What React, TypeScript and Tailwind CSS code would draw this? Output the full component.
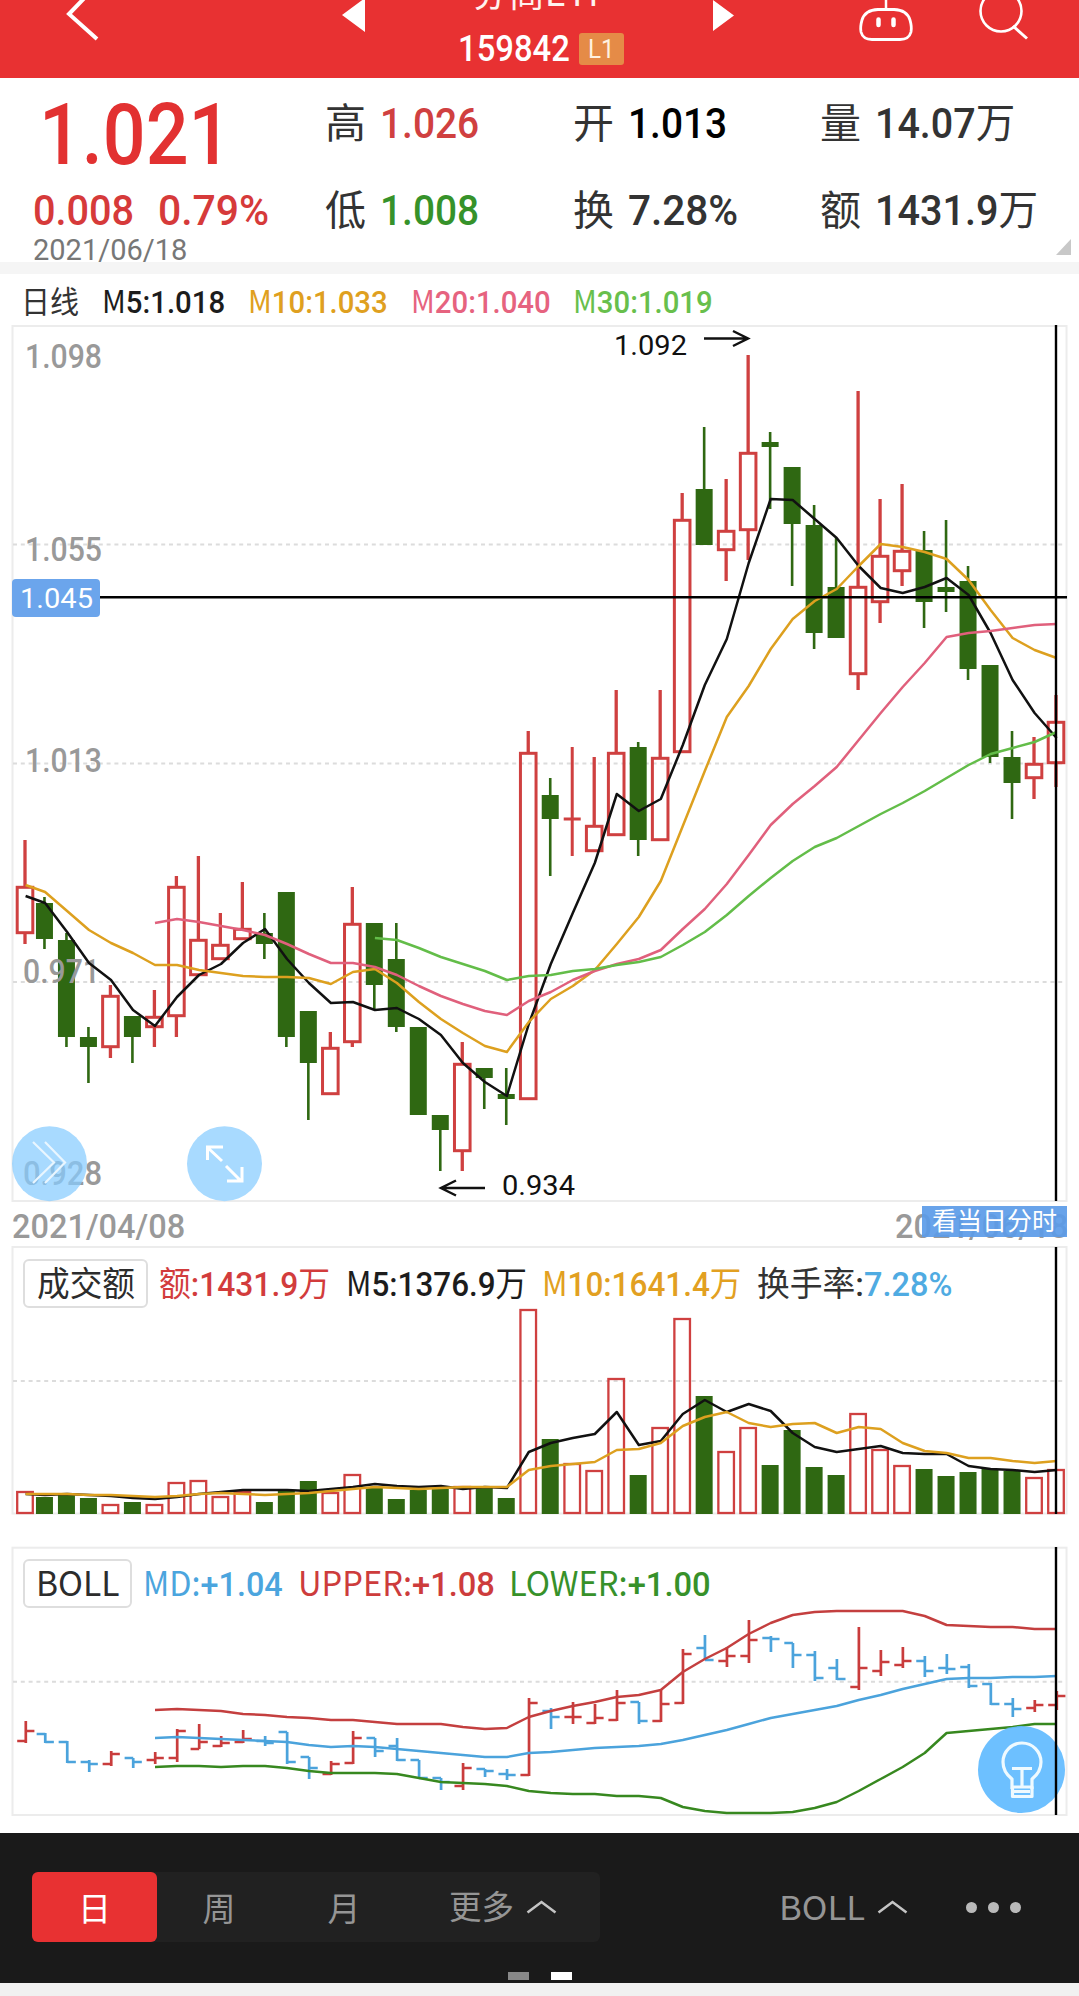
import React, { useLayoutEffect, useRef, useState } from "react";

const RED = "#cf4040";
const GREEN = "#2f6812";
const BLUE = "#4ba3dc";

const STEP = 21.99;
const cx = (i: number) => (i === 0 ? 25 : 1056 - (47 - i) * STEP);

type Kind = "r" | "g";

// kind, high, body top, body bottom, low, volume top
const candles: [Kind, number, number, number, number, number][] = [
  ["r", 840, 886, 934, 944, 1491],
  ["g", 897, 903, 939, 949, 1497],
  ["g", 933, 940, 1037, 1047, 1495],
  ["g", 1027, 1037, 1047, 1083, 1498],
  ["r", 985, 995, 1048, 1058, 1504],
  ["g", 1016, 1016, 1037, 1063, 1502],
  ["r", 990, 1016, 1028, 1047, 1504],
  ["r", 876, 886, 1017, 1037, 1482],
  ["r", 856, 939, 976, 976, 1480],
  ["r", 913, 944, 960, 960, 1496],
  ["r", 882, 928, 940, 940, 1491],
  ["g", 913, 933, 944, 959, 1502],
  ["g", 892, 892, 1037, 1047, 1491],
  ["g", 1011, 1011, 1063, 1120, 1481],
  ["r", 1032, 1047, 1095, 1095, 1492],
  ["r", 887, 923, 1043, 1047, 1474],
  ["g", 923, 923, 985, 1010, 1488],
  ["g", 923, 959, 1027, 1032, 1499],
  ["g", 1027, 1027, 1115, 1115, 1490],
  ["g", 1115, 1115, 1130, 1171, 1489],
  ["r", 1042, 1063, 1152, 1171, 1486],
  ["g", 1068, 1068, 1078, 1109, 1487],
  ["g", 1068, 1094, 1099, 1125, 1498],
  ["r", 731, 752, 1100, 1100, 1309],
  ["g", 778, 795, 819, 876, 1439],
  ["r", 747, 819, 819, 856, 1463],
  ["r", 757, 825, 852, 852, 1470],
  ["r", 690, 752, 836, 836, 1378],
  ["g", 742, 747, 840, 856, 1475],
  ["r", 690, 757, 841, 841, 1427],
  ["r", 493, 519, 753, 753, 1318],
  ["g", 427, 489, 545, 545, 1396],
  ["r", 479, 530, 551, 581, 1451],
  ["r", 355, 452, 531, 560, 1427],
  ["g", 432, 442, 447, 509, 1465],
  ["g", 467, 467, 524, 586, 1430],
  ["g", 505, 525, 633, 649, 1467],
  ["g", 538, 587, 638, 638, 1475],
  ["r", 391, 586, 675, 690, 1413],
  ["r", 499, 555, 603, 623, 1449],
  ["r", 484, 550, 572, 586, 1465],
  ["g", 531, 550, 602, 628, 1469],
  ["g", 520, 587, 592, 612, 1476],
  ["g", 566, 581, 669, 680, 1472],
  ["g", 665, 665, 757, 763, 1469],
  ["g", 731, 757, 783, 819, 1471],
  ["r", 737, 763, 779, 799, 1477],
  ["r", 695, 721, 764, 787, 1469],
];

// high, open, close, low
const bollBars: [number, number, number, number][] = [
  [1721, 1741, 1731, 1743], [1733, 1734, 1742, 1743], [1741, 1742, 1762, 1763], [1760, 1762, 1764, 1772],
  [1751, 1764, 1754, 1766], [1758, 1758, 1762, 1768], [1752, 1760, 1758, 1764], [1729, 1758, 1731, 1762],
  [1724, 1749, 1742, 1749], [1736, 1746, 1743, 1747], [1730, 1742, 1739, 1743], [1736, 1741, 1743, 1746],
  [1732, 1732, 1762, 1764], [1757, 1757, 1768, 1779], [1761, 1774, 1764, 1775], [1731, 1763, 1738, 1764],
  [1738, 1738, 1751, 1757], [1738, 1746, 1760, 1761], [1760, 1760, 1778, 1779], [1778, 1778, 1782, 1790],
  [1763, 1786, 1768, 1790], [1769, 1769, 1771, 1777], [1769, 1774, 1775, 1780], [1698, 1775, 1703, 1776],
  [1708, 1711, 1717, 1729], [1702, 1717, 1717, 1724], [1704, 1723, 1718, 1724], [1690, 1720, 1703, 1721],
  [1702, 1702, 1721, 1724], [1690, 1721, 1704, 1722], [1649, 1703, 1654, 1704], [1635, 1648, 1660, 1660],
  [1647, 1661, 1656, 1667], [1620, 1656, 1640, 1663], [1636, 1638, 1639, 1652], [1643, 1643, 1655, 1668],
  [1651, 1655, 1678, 1681], [1659, 1668, 1679, 1680], [1627, 1687, 1668, 1690], [1650, 1671, 1662, 1676],
  [1647, 1665, 1661, 1668], [1656, 1661, 1671, 1677], [1654, 1668, 1669, 1674], [1664, 1667, 1686, 1688],
  [1683, 1684, 1704, 1705], [1698, 1704, 1709, 1717], [1700, 1708, 1705, 1712], [1691, 1705, 1696, 1710],
];

const ma5 = [
  896, 903, 932, 963, 980, 1010, 1026, 997, 975, 964, 943, 929, 959, 983, 1003, 1002, 1010, 1008, 1019, 1035, 1063,
  1082, 1096, 1024, 964, 913, 863, 794, 811, 799, 745, 685, 639, 563, 499, 500, 519, 538, 566, 588, 593, 587, 578, 595,
  633, 680, 713, 738,
];
const ma10 = [
  885, 892, 911, 930, 943, 953, 965, 965, 970, 973, 976, 977, 977, 978, 984, 972, 969, 983, 1002, 1019, 1033, 1046,
  1052, 1022, 999, 986, 970, 944, 917, 881, 826, 771, 717, 686, 649, 619, 601, 589, 566, 544, 547, 552, 559, 580, 610,
  638, 650, 658,
];
const ma20 = [
  923, 919, 922, 926, 930, 935, 944, 954, 963, 963, 967, 975, 986, 996, 1004, 1011, 1015, 1001, 992, 980, 971, 964, 959,
  950, 929, 909, 884, 855, 825, 804, 786, 767, 740, 713, 687, 663, 637, 633, 631, 628, 625, 624,
];
const ma30 = [
  938, 940, 948, 957, 964, 971, 980, 976, 975, 971, 969, 965, 962, 957, 945, 932, 915, 896, 878, 861, 847, 838, 826,
  814, 803, 791, 778, 765, 754, 748, 742, 732,
];
const vol5 = [
  1494, 1495, 1494, 1495, 1496, 1498, 1499, 1497, 1494, 1492, 1490, 1490, 1490, 1491, 1489, 1487, 1484, 1486, 1487,
  1486, 1489, 1487, 1488, 1452, 1443, 1438, 1434, 1412, 1445, 1441, 1414, 1400, 1412, 1404, 1411, 1433, 1447, 1452,
  1449, 1446, 1453, 1454, 1454, 1466, 1469, 1470, 1472, 1470,
];
const vol10 = [
  1494, 1494, 1494, 1495, 1495, 1496, 1497, 1496, 1494, 1493, 1494, 1495, 1494, 1493, 1491, 1489, 1487, 1488, 1489,
  1488, 1487, 1487, 1487, 1470, 1466, 1464, 1462, 1450, 1449, 1443, 1426, 1417, 1412, 1423, 1427, 1424, 1423, 1433,
  1427, 1429, 1443, 1451, 1453, 1458, 1458, 1461, 1463, 1461,
];
const upper = [
  1710, 1709, 1710, 1711, 1714, 1715, 1717, 1718, 1720, 1720, 1722, 1724, 1724, 1724, 1727, 1729, 1728, 1717, 1711,
  1706, 1702, 1697, 1695, 1690, 1672, 1659, 1648, 1634, 1623, 1615, 1612, 1611, 1611, 1611, 1611, 1616, 1625, 1626,
  1627, 1627, 1629, 1629,
];
const middle = [
  1738, 1737, 1738, 1739, 1740, 1741, 1742, 1745, 1747, 1746, 1747, 1749, 1751, 1753, 1755, 1757, 1757, 1753, 1752,
  1750, 1748, 1747, 1746, 1744, 1740, 1735, 1730, 1724, 1718, 1714, 1710, 1706, 1700, 1695, 1689, 1684, 1679, 1678,
  1678, 1677, 1677, 1676,
];
const lower = [
  1767, 1766, 1766, 1767, 1766, 1766, 1768, 1771, 1773, 1773, 1773, 1774, 1778, 1782, 1783, 1784, 1786, 1791, 1793,
  1794, 1794, 1796, 1796, 1798, 1807, 1811, 1813, 1813, 1813, 1812, 1808, 1802, 1791, 1779, 1767, 1753, 1733, 1731,
  1729, 1727, 1724, 1724,
];

// Squeezes its text horizontally to the given width
const Fit = ({ w, className = "", children }: { w: number; className?: string; children: React.ReactNode }) => {
  const ref = useRef<HTMLSpanElement>(null);
  const [scale, setScale] = useState(1);

  useLayoutEffect(() => {
    if (ref.current) setScale(w / ref.current.offsetWidth);
  }, [w]);

  return (
    <span className={`block shrink-0 leading-none ${className}`} style={{ width: w }}>
      <span ref={ref} className="inline-block origin-left whitespace-nowrap" style={{ transform: `scaleX(${scale})` }}>
        {children}
      </span>
    </span>
  );
};

const Thin = ({ children }: { children: React.ReactNode }) => (
  <span className="font-['Noto_Sans_CJK_SC',sans-serif] font-normal leading-[0]">{children}</span>
);

const Line = ({ data, color }: { data: number[]; color: string }) => {
  const start = 48 - data.length;
  const points = data.map((y, i) => `${(cx(start + i) + 0.6).toFixed(1)},${y}`).join(" ");
  return <polyline points={points} fill="none" stroke={color} strokeWidth="2.5" strokeLinejoin="round" />;
};

const Grid = ({ y }: { y: number }) => (
  <line x1="13" x2="1066" y1={y} y2={y} stroke="#dcdcdc" strokeWidth="2" strokeDasharray="4 3.8" />
);

const Frame = ({ top, bottom }: { top: number; bottom: number }) => (
  <rect x="12.5" y={top} width="1054" height={bottom - top} fill="none" stroke="#ececec" strokeWidth="2" />
);

const Cursor = ({ top, bottom }: { top: number; bottom: number }) => (
  <line x1="1056" x2="1056" y1={top} y2={bottom} stroke="#000" strokeWidth="2.4" />
);

const SvgText = ({ x, y, w, size = 28.5, fill = "#111", weight = 400, children }: any) => (
  <text
    x={x}
    y={y}
    fontSize={size}
    fill={fill}
    fontWeight={weight}
    textLength={w}
    lengthAdjust="spacingAndGlyphs"
    className="font-[Roboto,sans-serif]"
  >
    {children}
  </text>
);

const Header = () => (
  <header className="relative h-[78px] overflow-hidden bg-[#e83132]">
    <svg className="absolute inset-0" width="1079" height="78" viewBox="0 0 1079 78" fill="none" stroke="#fff">
      <path d="M96 -14 L69 14 L97 39" strokeWidth="4" />
      <path d="M342 15 L365 -2 V32 Z M734 15.5 L713 0 V31 Z" fill="#fff" stroke="none" />
      <path d="M886 -2 V9" strokeWidth="2.5" />
      <path
        d="M878 9.5 H894 Q907 10 910 20 Q912 27 911 32 Q909 39.5 900 39.5 H872 Q863 39.5 861 32 Q860 27 862 20 Q865 10 878 9.5 Z"
        strokeWidth="2.8"
      />
      <path d="M878.5 19.5 V25 M893.5 19.5 V25" strokeWidth="4.5" strokeLinecap="round" />
      <circle cx="1001" cy="11" r="20.5" strokeWidth="2.6" />
      <path d="M1013 26 L1027 38.5" strokeWidth="3" />
    </svg>
    <div className="-mt-[26px] flex flex-col items-center">
      <Fit w={136} className="text-[38px] text-[#fff2ee]">
        <Thin>券商ETF</Thin>
      </Fit>
      <div className="mt-[19px] ml-[2px] flex items-center gap-[9px]">
        <Fit w={112} className="text-[36px] font-medium text-white">159842</Fit>
        <div className="mt-[-1px] flex h-8 w-[45px] items-center justify-center rounded-[3px] bg-[#e58b47]">
          <Fit w={27} className="text-[26px] text-[#fff1df]">L1</Fit>
        </div>
      </div>
    </div>
  </header>
);

const Stat = ({ label, value, w, color = "text-[#333]" }: { label: string; value: string; w: number; color?: string }) => {
  const hasUnit = value.endsWith("万");
  return (
    <div className="flex h-[44px] items-center gap-[14px]">
      <Fit w={41} className="pt-px text-[41px] text-[#333]">
        <Thin>{label}</Thin>
      </Fit>
      <Fit w={w} className={`text-[42px] font-medium ${color}`}>
        {hasUnit ? value.slice(0, -1) : value}
        {hasUnit && <Thin>万</Thin>}
      </Fit>
    </div>
  );
};

const Summary = () => (
  <section className="relative flex h-[184px] bg-white">
    <div className="w-[325px] pt-[14px] pl-[33px]">
      <Fit w={192} className="ml-[6px] text-[86px] font-medium text-[#e23131]">1.021</Fit>
      <div className="mt-[12px] flex gap-[24px]">
        <Fit w={101} className="text-[42px] font-medium text-[#d63a3a]">0.008</Fit>
        <Fit w={111} className="text-[42px] font-medium text-[#d63a3a]">0.79%</Fit>
      </div>
      <Fit w={154} className="mt-[4px] text-[29px] text-[#777]">2021/06/18</Fit>
    </div>
    <div className="flex w-[248px] flex-col gap-[43px] pt-[24px]">
      <Stat label="高" value="1.026" w={99} color="text-[#d04040]" />
      <Stat label="低" value="1.008" w={99} color="text-[#36922a]" />
    </div>
    <div className="flex w-[247px] flex-col gap-[43px] pt-[24px]">
      <Stat label="开" value="1.013" w={99} color="text-black" />
      <Stat label="换" value="7.28%" w={110} />
    </div>
    <div className="flex flex-col gap-[43px] pt-[24px]">
      <Stat label="量" value="14.07万" w={140} />
      <Stat label="额" value="1431.9万" w={163} />
    </div>
    <svg className="absolute right-2 bottom-[7px]" width="15" height="16" viewBox="0 0 15 16">
      <path d="M15 0 V16 H0 Z" fill="#c8c8c8" />
    </svg>
  </section>
);

const Averages = () => (
  <div className="flex h-[51px] items-center bg-white pt-[6px] pl-[21px] text-[31px] font-medium">
    <Fit w={58} className="text-[#333]"><Thin>日线</Thin></Fit>
    <Fit w={123} className="ml-[23px] text-[#1c1c1c]"><Thin>M</Thin>5:1.018</Fit>
    <Fit w={140} className="ml-[23px] text-[#dfa020]"><Thin>M</Thin>10:1.033</Fit>
    <Fit w={140} className="ml-[23px] text-[#e6637f]"><Thin>M</Thin>20:1.040</Fit>
    <Fit w={140} className="ml-[22px] text-[#68bf4c]"><Thin>M</Thin>30:1.019</Fit>
  </div>
);

const CandleChart = () => (
  <svg className="block" width="1079" height="878" viewBox="0 325 1079 878">
    <Frame top={326} bottom={1201} />
    <Grid y={544.5} />
    <Grid y={763.5} />
    <Grid y={982} />
    {candles.map(([kind, high, top, bottom, low], i) => {
      const x = cx(i);
      if (kind === "g") {
        return (
          <g key={i} fill={GREEN}>
            <rect x={x - 1.3} y={high} width="2.6" height={low - high} />
            <rect x={x - 8.5} y={top} width="17" height={bottom - top} />
          </g>
        );
      }
      if (top === bottom) {
        return <path key={i} d={`M${x} ${high} V${low} M${x - 8.5} ${top} H${x + 8.5}`} stroke={RED} strokeWidth="3" />;
      }
      return (
        <g key={i} stroke={RED} strokeWidth="3.3" fill="none">
          <path d={`M${x} ${high} V${top} M${x} ${bottom} V${low}`} />
          <rect x={x - 7.8} y={top + 1.3} width="15.6" height={bottom - top - 2.6} strokeWidth="3" />
        </g>
      );
    })}
    <SvgText x={25} y={367.5} w={77} size={34} fill="#999" weight={500}>1.098</SvgText>
    <SvgText x={25} y={561} w={77} size={34} fill="#999" weight={500}>1.055</SvgText>
    <SvgText x={25} y={772} w={77} size={34} fill="#999" weight={500}>1.013</SvgText>
    <SvgText x={23} y={982.5} w={77} size={34} fill="#999" weight={500}>0.971</SvgText>
    <SvgText x={23} y={1185} w={79} size={34} fill="#999" weight={500}>0.928</SvgText>
    <Line data={ma5} color="#111" />
    <Line data={ma10} color="#dda01f" />
    <Line data={ma20} color="#e0607c" />
    <Line data={ma30} color="#63bd49" />

    <SvgText x={614} y={355} w={73}>1.092</SvgText>
    <path d="M704 338.5 H748 M733 331 L748 338.5 L733 346" fill="none" stroke="#111" strokeWidth="2.5" />
    <SvgText x={502} y={1195} w={73}>0.934</SvgText>
    <path d="M485 1188 H441 M456 1180.5 L441 1188 L456 1195.5" fill="none" stroke="#111" strokeWidth="2.5" />

    <line x1="100" x2="1067" y1="597.3" y2="597.3" stroke="#000" strokeWidth="2.6" />
    <rect x="12" y="579" width="88" height="38" rx="4" fill="#6ba5ec" />
    <SvgText x={20} y={608} w={73} fill="#fff">1.045</SvgText>

    {/* floating chart buttons */}
    <circle cx="49.5" cy="1163.7" r="37.5" fill="#86ccff" fillOpacity="0.72" />
    <path d="M33 1142 L54 1162.5 L33 1183 M45 1142 L65 1162.5 L45 1183" fill="none" stroke="#e9f6ff" strokeWidth="2.2" />
    <circle cx="224.5" cy="1163.7" r="37.5" fill="#a8daff" />
    <path
      d="M222 1161 L207 1147 M207.5 1160 V1147 H223 M226 1166 L241 1181 M242 1167 V1181 H227"
      fill="none"
      stroke="#fff"
      strokeWidth="3"
    />
    <Cursor top={325} bottom={1201} />
  </svg>
);

const DateRow = () => (
  <div className="relative flex h-[43px] justify-between bg-white pt-[6px] pr-[11px] pl-[12px] text-[34px] font-medium text-[#999]">
    <Fit w={173}>2021/04/08</Fit>
    <Fit w={173}>2021/06/18</Fit>
    <div className="absolute top-[3px] right-3 flex h-[31px] w-[145px] items-center justify-center bg-[#5b9be8]/92">
      <Fit w={125} className="text-[25px] text-white"><Thin>看当日分时</Thin></Fit>
    </div>
  </div>
);

const VolumePanel = () => (
  <section className="relative h-[269px] bg-white">
    <svg className="absolute inset-0" width="1079" height="269" viewBox="0 1246 1079 269">
      <Frame top={1247} bottom={1513.5} />
      <Grid y={1381} />
      {candles.map(([kind, , , , , top], i) =>
        kind === "g" ? (
          <rect key={i} x={cx(i) - 8.5} y={top} width="17" height={1514 - top} fill={GREEN} />
        ) : (
          <rect
            key={i}
            x={cx(i) - 7.8}
            y={top + 1}
            width="15.6"
            height={1512 - top}
            fill="none"
            stroke={RED}
            strokeWidth="2.3"
          />
        )
      )}
      <Line data={vol5} color="#111" />
      <Line data={vol10} color="#dda01f" />
      <Cursor top={1247} bottom={1514} />
    </svg>
    <div className="relative flex items-center pt-[13px] pl-[23px] text-[34px] font-medium">
      <div className="flex h-[49px] w-[125px] items-center justify-center rounded-md border-2 border-[#dedede] bg-white text-[#2c2c2c]">
        <Fit w={98}><Thin>成交额</Thin></Fit>
      </div>
      <Fit w={171} className="ml-[11px] text-[#d23c3c]"><Thin>额</Thin>:1431.9<Thin>万</Thin></Fit>
      <Fit w={181} className="ml-[16px] text-[#1c1c1c]"><Thin>M</Thin>5:1376.9<Thin>万</Thin></Fit>
      <Fit w={199} className="ml-[15px] text-[#e2a021]"><Thin>M</Thin>10:1641.4<Thin>万</Thin></Fit>
      <Fit w={107} className="ml-[16px] text-[#333]"><Thin>换手率</Thin>:</Fit>
      <Fit w={88} className="text-[#4fabe2]">7.28%</Fit>
    </div>
  </section>
);

const BollPanel = () => (
  <section className="relative mt-[31px] h-[270px] bg-white">
    <svg className="absolute inset-0" width="1079" height="270" viewBox="0 1546 1079 270">
      <Frame top={1547.7} bottom={1815} />
      <Grid y={1681.7} />
      {bollBars.map(([high, open, close, low], i) => {
        const x = cx(i) + 0.8;
        return (
          <path
            key={i}
            d={`M${x} ${high} V${low} M${x - 8.6} ${open} H${x} M${x} ${close} H${x + 8.6}`}
            fill="none"
            stroke={candles[i][0] === "r" ? "#c93c3c" : BLUE}
            strokeWidth="2.7"
          />
        );
      })}
      <Line data={upper} color="#c43f3f" />
      <Line data={middle} color={BLUE} />
      <Line data={lower} color="#37881f" />
      <circle cx="1021.5" cy="1769.5" r="43.5" fill="#62bbff" fillOpacity="0.93" />
      <g fill="none" stroke="#effaff" strokeWidth="3.2" strokeLinejoin="round">
        <path d="M1012 1789 V1779 Q1003 1772 1003 1762 A19 19 0 0 1 1041 1762 Q1041 1772 1032 1779 V1789" />
        <path d="M1012.5 1787 H1032 V1796.5 H1012.5 Z M1014 1791.5 H1030 M1012 1768.5 H1032 M1022 1768.5 V1787" />
      </g>
      <Cursor top={1547} bottom={1815} />
    </svg>
    <div className="relative flex items-center pt-[13px] pl-[23px] text-[34px] font-medium">
      <div className="flex h-[49px] w-[109px] items-center justify-center rounded-md border-2 border-[#dedede] bg-white pt-px text-[#2c2c2c]">
        <Fit w={84}><Thin>BOLL</Thin></Fit>
      </div>
      <Fit w={140} className="ml-[11px] text-[#4ba5de]"><Thin>MD:</Thin>+1.04</Fit>
      <Fit w={197} className="ml-[15px] text-[#cd3c3c]"><Thin>UPPER:</Thin>+1.08</Fit>
      <Fit w={202} className="ml-[14px] text-[#37912a]"><Thin>LOWER:</Thin>+1.00</Fit>
    </div>
  </section>
);

const Caret = () => (
  <svg width="31" height="14" viewBox="0 0 31 14" fill="none" stroke="#c4c4c4" strokeWidth="2.6">
    <path d="M1.5 12.5 L15.5 2 L29.5 12.5" />
  </svg>
);

const Footer = () => (
  <footer className="mt-[17px] h-[150px] bg-[#1a1a1a] pt-[39px] text-[33px] text-[#959595]">
    <div className="flex items-center pl-8">
      <div className="flex h-[70px] w-[568px] items-center rounded-md bg-[#212121]">
        <div className="flex h-full w-[125px] items-center justify-center rounded-md bg-[#e83132] text-white">
          <Thin>日</Thin>
        </div>
        <div className="flex w-[124px] justify-center"><Thin>周</Thin></div>
        <div className="flex w-[126px] justify-center"><Thin>月</Thin></div>
        <div className="ml-[42px] flex items-center gap-[12px]">
          <Fit w={65} className="pt-px"><Thin>更多</Thin></Fit>
          <Caret />
        </div>
      </div>
      <div className="ml-[179px] flex items-center gap-[12px]">
        <Fit w={86} className="pt-[3px]"><Thin>BOLL</Thin></Fit>
        <Caret />
      </div>
      <div className="ml-[58px] flex gap-[11px]">
        <i className="size-[11px] rounded-full bg-[#b9b9b9]" />
        <i className="size-[11px] rounded-full bg-[#b9b9b9]" />
        <i className="size-[11px] rounded-full bg-[#b9b9b9]" />
      </div>
    </div>
    <div className="mt-[30px] flex justify-center gap-[22px]">
      <i className="h-2 w-[21px] bg-[#888]" />
      <i className="h-2 w-[21px] bg-white" />
    </div>
  </footer>
);

export default function App() {
  return (
    <main className="h-[1996px] w-[1079px] overflow-hidden bg-[#f1f1f1] font-[Roboto,'Noto_Sans_CJK_SC',sans-serif]">
      <div className="bg-white">
        <Header />
        <Summary />
        <div className="h-3 bg-[#f5f5f5]" />
        <Averages />
        <CandleChart />
        <DateRow />
        <VolumePanel />
        <BollPanel />
        <Footer />
      </div>
    </main>
  );
}
